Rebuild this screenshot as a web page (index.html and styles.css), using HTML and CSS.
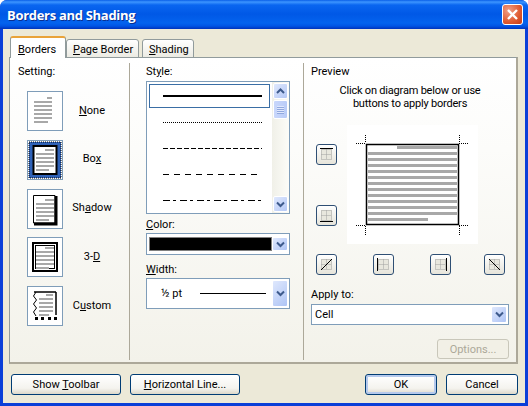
FILE: index.html
```html
<!DOCTYPE html>
<html lang="en">
<head>
<meta charset="utf-8">
<title>Borders and Shading</title>
<link rel="stylesheet" href="styles.css">
</head>
<body>
<svg class="defs" width="0" height="0" aria-hidden="true">
  <defs>
    <symbol id="chev" viewBox="0 0 9 7"><path d="M1 1.500 4.500 5 8 1.500" fill="none" stroke="#3d5a8c" stroke-width="2"/></symbol>
    <symbol id="chevup" viewBox="0 0 9 7"><path d="M1 5 4.500 1.500 8 5" fill="none" stroke="#3d5a8c" stroke-width="2"/></symbol>
    <g id="grid"><rect x="4" y="4" width="11" height="11" fill="#e8e7de"/><path d="M4.500 4.500h10v10h-10zM9.500 4.500v10M4.500 9.500h10" fill="none" stroke="#a0a0a0" stroke-dasharray="1 1"/></g>
    <g id="doc" fill="#a8a8a8">
      <rect x="20" y="9" width="9" height="2"/><rect x="11" y="13" width="18" height="2"/><rect x="11" y="17" width="18" height="2"/>
      <rect x="11" y="21" width="18" height="2"/><rect x="11" y="25" width="18" height="2"/><rect x="11" y="29" width="13" height="2"/>
    </g>
  </defs>
</svg>
<main class="window">
  <header class="titlebar">
    <h1 class="title">Borders and Shading</h1>
    <button class="close" aria-label="Close"><svg width="13" height="13" viewBox="0 0 13 13"><path d="M2 2l9 9M11 2l-9 9" stroke="#fff" stroke-width="2.400"/></svg></button>
  </header>
  <div class="content">
    <nav class="tabs">
      <span class="tab tab-active"><u>B</u>orders</span>
      <span class="tab tab-page"><u>P</u>age Border</span>
      <span class="tab tab-shading"><u>S</u>hading</span>
    </nav>
    <section class="panel">
      <div class="col-setting">
        <div class="label">Setting:</div>
        <div class="settings">
          <div class="setting"><span class="swatch"><svg width="34" height="38" viewBox="0 0 34 38"><g transform="translate(-5 -2)"><g fill="#a8a8a8"><rect x="24" y="7" width="5" height="2"/><rect x="11" y="11" width="18" height="2"/><rect x="11" y="15" width="18" height="2"/><rect x="11" y="19" width="18" height="2"/><rect x="11" y="23" width="18" height="2"/><rect x="11" y="27" width="18" height="2"/><rect x="11" y="31" width="14" height="2"/></g></g></svg></span><span class="setting-name"><u>N</u>one</span></div>
          <div class="setting"><span class="swatch swatch-on"><svg width="34" height="38" viewBox="0 0 34 38"><rect x="1" y="1" width="32" height="36" fill="#2f62b8" stroke="#000" stroke-dasharray="1 1"/><rect x="5.500" y="5" width="23" height="28" fill="#fff" stroke="#000" stroke-width="2"/><g transform="translate(-3 -1)"><use href="#doc"/></g></svg></span><span class="setting-name">Bo<u>x</u></span></div>
          <div class="setting"><span class="swatch"><svg width="34" height="38" viewBox="0 0 34 38"><path d="M5.500 5.500H27V33H5.500Z" fill="#fff" stroke="#000"/><path d="M28 6v28H6" fill="none" stroke="#000" stroke-width="3"/><g transform="translate(-3 0)"><use href="#doc"/></g></svg></span><span class="setting-name">Sh<u>a</u>dow</span></div>
          <div class="setting"><span class="swatch"><svg width="34" height="38" viewBox="0 0 34 38"><rect x="5" y="5" width="24" height="28" fill="#fff" stroke="#000" stroke-width="2"/><rect x="7.500" y="7.500" width="19" height="23" fill="#fff" stroke="#000"/><g transform="translate(-3 0)"><use href="#doc"/></g></svg></span><span class="setting-name">3-<u>D</u></span></div>
          <div class="setting"><span class="swatch"><svg width="34" height="38" viewBox="0 0 34 38"><path d="M6 5h22M28 5v23" fill="none" stroke="#000" stroke-width="1.500"/><path d="M8 5 5.500 9 8.500 13 5.500 17 8.500 21 5.500 25 8 29" fill="none" stroke="#000"/><path d="M7 30h3v3H7zM13 30h3v3h-3zM20 30h3v3h-3zM26 30h3v3h-3z" fill="#000"/><g transform="translate(2.400 -2) scale(.78 1)"><use href="#doc"/></g></svg></span><span class="setting-name">C<u>u</u>stom</span></div>
        </div>
      </div>
      <div class="col-style">
        <div class="label">St<u>y</u>le:</div>
        <div class="style-list">
          <div class="rows">
            <div class="row row-on"><i class="ln ln-solid"></i></div>
            <div class="row"><i class="ln ln-dot"></i></div>
            <div class="row"><i class="ln ln-dash"></i></div>
            <div class="row"><i class="ln ln-long"></i></div>
            <div class="row"><i class="ln ln-dashdot"></i></div>
          </div>
          <div class="scrollbar">
            <span class="sb-btn"><svg width="9" height="7"><use href="#chevup"/></svg></span>
            <span class="sb-thumb"></span>
            <span class="sb-btn sb-down"><svg width="9" height="7"><use href="#chev"/></svg></span>
          </div>
        </div>
        <div class="label label-color"><u>C</u>olor:</div>
        <div class="combo combo-color">
          <span class="color-value"></span>
          <span class="arrow"><svg width="9" height="7"><use href="#chev"/></svg></span>
        </div>
        <div class="label label-width"><u>W</u>idth:</div>
        <div class="combo combo-width">
          <span class="width-text">½ pt</span><i class="width-line"></i>
          <span class="arrow"><svg width="9" height="7"><use href="#chev"/></svg></span>
        </div>
      </div>
      <div class="col-preview">
        <div class="label">Preview</div>
        <p class="hint">Click on diagram below or use<br>buttons to apply borders</p>
        <div class="diagram">
          <div class="side-btns">
            <span class="tool"><svg width="19" height="19" viewBox="0 0 19 19"><use href="#grid"/><path d="M3 3.500h13" stroke="#000"/></svg></span>
            <span class="tool"><svg width="19" height="19" viewBox="0 0 19 19"><use href="#grid"/><path d="M3 15.500h13" stroke="#000"/></svg></span>
          </div>
          <svg class="sheet" width="131" height="119" viewBox="0 0 131 119">
            <path d="M18.500 10v8M9 18.500h9M112.500 10v8M112 18.500h9M18.500 101v9M9 100.500h9M112.500 101v9M112 100.500h9" stroke="#000" stroke-dasharray="1 1"/>
            <rect x="19.500" y="19.500" width="92" height="80" fill="#fff" stroke="#000" stroke-width="1.500"/>
            <g fill="#a8a8a8">
              <rect x="50" y="21" width="60" height="3"/><rect x="21" y="27" width="89" height="3"/><rect x="21" y="33" width="89" height="3"/><rect x="21" y="39" width="89" height="3"/><rect x="21" y="45" width="89" height="3"/><rect x="21" y="51" width="89" height="3"/><rect x="21" y="57" width="89" height="3"/><rect x="21" y="63" width="89" height="3"/><rect x="21" y="69" width="89" height="3"/><rect x="21" y="75" width="89" height="3"/><rect x="21" y="81" width="89" height="3"/><rect x="21" y="87" width="89" height="3"/><rect x="21" y="93" width="60" height="3"/>
            </g>
          </svg>
        </div>
        <div class="bottom-btns">
          <span class="tool"><svg width="19" height="19" viewBox="0 0 19 19"><use href="#grid"/><path d="M4 15 15 4" stroke="#000"/></svg></span>
          <span class="tool"><svg width="19" height="19" viewBox="0 0 19 19"><use href="#grid"/><path d="M3.500 3v13" stroke="#000"/></svg></span>
          <span class="tool"><svg width="19" height="19" viewBox="0 0 19 19"><use href="#grid"/><path d="M15.500 3v13" stroke="#000"/></svg></span>
          <span class="tool tool-last"><svg width="19" height="19" viewBox="0 0 19 19"><use href="#grid"/><path d="M4 4 15 15" stroke="#000"/></svg></span>
        </div>
        <div class="label label-apply">Apply to:</div>
        <div class="combo combo-apply">
          <span class="apply-value">Cell</span>
          <span class="arrow"><svg width="9" height="7"><use href="#chev"/></svg></span>
        </div>
        <div class="options-row"><button class="btn btn-options" disabled>Options...</button></div>
      </div>
    </section>
    <footer class="footer">
      <button class="btn btn-wide">Show <u>T</u>oolbar</button>
      <button class="btn btn-wide"><u>H</u>orizontal Line...</button>
      <span class="spacer"></span>
      <button class="btn btn-main btn-default">OK</button>
      <button class="btn btn-main">Cancel</button>
    </footer>
  </div>
</main>
</body>
</html>
```
FILE: styles.css
```css
* { box-sizing: border-box; }
html, body { margin: 0; padding: 0; background: #fff; }
body { width: 528px; height: 406px; overflow: hidden; font: 11px/13px Roboto, "Liberation Sans", sans-serif; color: #000; }
.defs { position: absolute; }
u { text-decoration-thickness: 1px; text-underline-offset: 1px; }

.window { width: 528px; height: 406px; display: flex; flex-direction: column; background: #0a3fd8; border-radius: 7px 7px 0 0; overflow: hidden; }
.titlebar { height: 29px; flex: none; display: flex; align-items: center; justify-content: space-between; padding: 0 5px 0 7px; background: linear-gradient(180deg, #0a5fe8 0, #3d95ff 2px, #0a66f0 5px, #0058e6 14px, #0463ee 23px, #0055e5 26px, #0033bb 29px); }
.title { margin: 0; font: bold 13px/16px "Open Sans", "Noto Sans", sans-serif; letter-spacing: -0.3px; color: #fff; text-shadow: 1px 1px 0 #0a2f90; }
.close { width: 21px; height: 21px; padding: 0; display: flex; align-items: center; justify-content: center; border: 1px solid #fff; border-radius: 3px; background: radial-gradient(circle at 30% 30%, #f0a088, #df5a30 60%, #c43a16); }

.content { flex: 1; display: flex; flex-direction: column; margin: 0 3px 3px; padding: 7px 7px 0 6px; background: #ece9d8; }
.tabs { display: flex; align-items: flex-end; height: 22px; padding-left: 1px; position: relative; z-index: 1; margin-bottom: -1px; }
.tab { height: 19px; padding: 3px 6px 0; margin-left: 1px; border: 1px solid #919b9c; border-bottom: 1px solid #919b9c; border-radius: 3px 3px 0 0; background: linear-gradient(180deg, #fff, #ecebe3); white-space: nowrap; }
.tab-active { width: 56px; height: 22px; margin-left: 0; padding: 5px 0 0 7px; border-top: 2px solid #e9a33a; border-bottom: 0; background: #fff; }
.tab-page { width: 73px; margin-left: 0; }
.tab-shading { width: 52px; margin-left: 3px; }

.panel { height: 307px; flex: none; display: grid; grid-template-columns: 120px 174px 1fr; border: 1px solid #919b9c; border-right: 2px solid #aca899; border-bottom: 2px solid #aca899; background: linear-gradient(180deg, #fff 0, #fcfcfa 30%, #f3f2ea 100%); }
.label { height: 13px; }
.col-setting, .col-style, .col-preview { margin-top: 5px; height: 297px; padding-top: 2px; }
.col-setting { padding-left: 8px; border-right: 1px solid #aca899; }
.col-style { padding-left: 16px; padding-right: 13px; border-right: 1px solid #aca899; width: 174px; }
.col-preview { padding-left: 7px; }

.settings { margin-top: 13px; display: flex; flex-direction: column; gap: 8.75px; }
.setting { display: flex; align-items: center; height: 40px; padding-left: 9px; }
.swatch { width: 36px; height: 40px; flex: none; border: 1px solid #7f9db9; background: #fff; display: block; }
.swatch svg { display: block; }
.setting-name { width: 58px; text-align: center; position: relative; top: -1px; }

.style-list { margin-top: 3px; height: 133px; display: flex; border: 1px solid #7f9db9; background: #fff; overflow: hidden; }
.rows { width: 125px; flex: none; padding: 1px 0 0 2px; }
.row { width: 121px; height: 26px; padding: 0 0 0 13px; display: flex; align-items: center; border: 1px solid transparent; }
.row-on { border-color: #3a6ea5; height: 24px; margin: 1px 0; }
.ln { display: block; width: 99px; height: 2px; }
.ln-solid { background: #000; }
.ln-dot { height: 1px; background: repeating-linear-gradient(90deg, #000 0 1px, transparent 1px 2px); }
.ln-dash { background: repeating-linear-gradient(90deg, #000 0 5px, transparent 5px 7px); height: 1px; }
.ln-long { background: repeating-linear-gradient(90deg, #000 0 6px, transparent 6px 11px); height: 1px; }
.ln-dashdot { background: repeating-linear-gradient(90deg, #000 0 7px, transparent 7px 10px, #000 10px 13px, transparent 13px 17px); height: 1px; }
.scrollbar { width: 17px; flex: none; display: flex; flex-direction: column; padding: 1px; background: linear-gradient(90deg, #f0f0e8, #fcfcf8); }
.sb-btn { height: 16px; display: flex; align-items: center; justify-content: center; border: 1px solid #fff; border-radius: 2px; background: linear-gradient(135deg, #dfe8fd, #b4c8f6); flex: none; }
.sb-thumb { height: 19px; margin-top: 1px; flex: none; border: 1px solid #fff; border-radius: 2px; background: repeating-linear-gradient(180deg, #e0e8fd 0 1px, #90a8de 1px 2px) center / 7px 8px no-repeat, linear-gradient(90deg, #c9d7fb, #b9ccf8); }
.sb-down { margin-top: auto; }

.label-color { margin-top: 4px; }
.label-width { margin-top: 8px; }
.combo { display: flex; align-items: center; border: 1px solid #7f9db9; background: #fff; margin-top: 2px; }
.combo-color { height: 22px; padding: 3px 1px 3px 2px; }
.color-value { width: 123px; height: 14px; flex: none; background: #000; border: 1px solid #808080; }
.arrow { margin-left: auto; width: 16px; align-self: stretch; display: flex; align-items: center; justify-content: center; background: linear-gradient(135deg, #dfe8fd, #aec4f5); border: 1px solid #fff; border-radius: 2px; }
.combo-width { height: 31px; margin-top: 2px; padding-right: 1px; }
.width-text { margin-left: 14px; width: 39px; }
.width-line { display: block; width: 66px; height: 1px; background: #000; }
.combo-width .arrow { margin-top: 1px; margin-bottom: 1px; }

.hint { margin: 6px 0 0; width: 198px; text-align: center; letter-spacing: -0.2px; }
.diagram { display: flex; margin-top: 15px; padding-left: 5px; height: 119px; }
.side-btns { width: 31px; padding-top: 19px; display: flex; flex-direction: column; gap: 40px; }
.tool { width: 21px; height: 21px; display: block; flex: none; padding: 0; border: 1px solid #2f4f74; border-radius: 3px; background: linear-gradient(180deg, #fff, #e6e4da); }
.tool svg { display: block; }
.sheet { background: #fff; flex: none; }
.bottom-btns { display: flex; gap: 36px; margin-top: 10px; padding-left: 5px; }
.tool-last { margin-left: -3px; }
.label-apply { margin-top: 13px; }
.combo-apply { width: 198px; height: 21px; margin-top: 3px; padding-right: 1px; }
.apply-value { padding-left: 3px; }
.combo-apply .arrow { margin-top: 1px; margin-bottom: 1px; }
.options-row { display: flex; justify-content: flex-end; width: 198px; margin-top: 14px; }

.btn { font: inherit; color: #000; padding: 0; height: 21px; border: 1px solid #003c74; border-radius: 3px; background: linear-gradient(180deg, #fff 0, #f4f3ee 70%, #dcd8ca 100%); }
.btn-options { width: 72px; height: 20px; color: #aca899; border-color: #c9c7ba; background: #f2f0e6; }
.footer { display: flex; align-items: flex-start; gap: 9px; padding-top: 10px; padding-left: 2px; }
.btn-wide { width: 110px; }
.btn-main { width: 72px; }
.spacer { flex: 1; }
.btn-default { box-shadow: inset 0 0 0 2px #b5c9ec; }
```
